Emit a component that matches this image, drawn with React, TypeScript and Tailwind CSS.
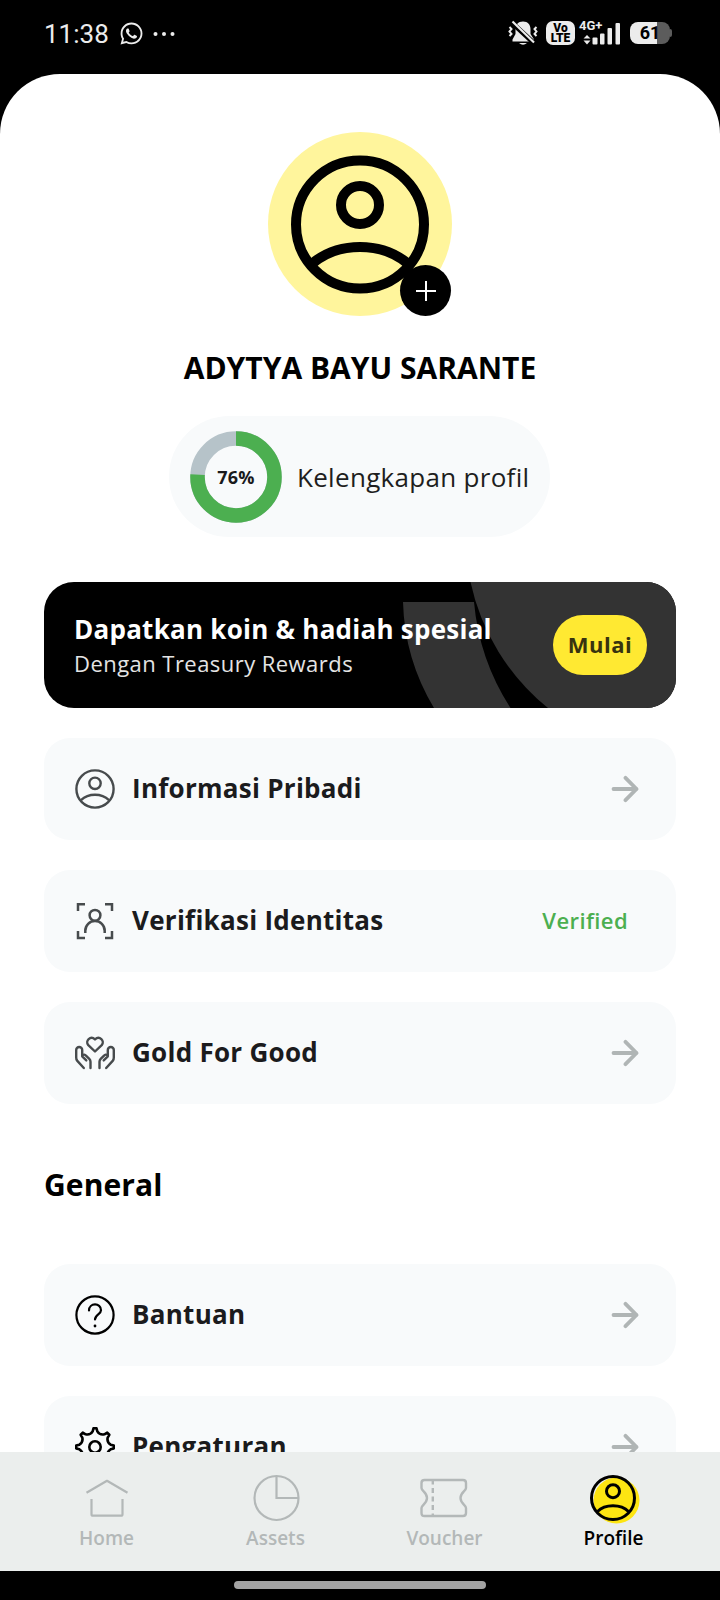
import * as React from "react";
import { FaWhatsapp } from "react-icons/fa";

interface IconProps {
  className?: string;
}

interface MenuRowProps {
  icon: React.ReactNode;
  label: string;
  status?: string;
}

interface NavItemProps {
  icon: React.ReactNode;
  label: string;
  active?: boolean;
}

function PersonIcon({ className }: IconProps) {
  return (
    <svg viewBox="0 0 40 40" fill="none" stroke="currentColor" strokeWidth="2.4" className={className}>
      <circle cx="20" cy="20" r="18.6" />
      <circle cx="20" cy="14.3" r="5.7" />
      <path d="M6 31.2C13.5 24 26.5 24 34 31.2" />
    </svg>
  );
}

function IdentityIcon({ className }: IconProps) {
  return (
    <svg viewBox="0 0 40 40" fill="none" stroke="currentColor" strokeWidth="2.5" className={className}>
      <path d="M10 3.2H3V10M30 3.2h7V10M10 37H3V30M30 37h7V30" />
      <circle cx="20" cy="14.3" r="5.4" />
      <path d="M10.3 32V29.8a9.7 9.7 0 0 1 19.4 0V32" />
    </svg>
  );
}

function CharityIcon({ className }: IconProps) {
  return (
    <svg
      viewBox="0 0 40 40"
      fill="none"
      stroke="currentColor"
      strokeWidth="2.4"
      strokeLinecap="round"
      strokeLinejoin="round"
      className={className}
    >
      <path d="M20 18.5L13.3 12.1C9.8 8 15.5 2 20 6.4C24.5 2 30.2 8 26.7 12.1Z" />
      <path d="M8.8 35L2.1 27.6Q1.2 26.3 1.2 24.5V17a3 3 0 0 1 6 0V23.3L11.3 27.4M7.2 22.7C8.5 21 10 21.6 11.2 22.8L14.3 25.8Q15.5 27 15.5 28.8V35" />
      <path d="M31.2 35L37.9 27.6Q38.8 26.3 38.8 24.5V17a3 3 0 0 0 -6 0V23.3L28.7 27.4M32.8 22.7C31.5 21 30 21.6 28.8 22.8L25.7 25.8Q24.5 27 24.5 28.8V35" />
    </svg>
  );
}

function HelpIcon({ className }: IconProps) {
  return (
    <svg viewBox="0 0 40 40" fill="none" stroke="currentColor" strokeWidth="2.2" strokeLinecap="round" className={className}>
      <circle cx="20" cy="20" r="18.6" />
      <path d="M14 15.5C14 7.5 26 7.5 26 15.2C26 19.3 20 19.5 20 24.5" />
      <circle cx="20" cy="31" r="1.4" fill="currentColor" stroke="none" />
    </svg>
  );
}

// Outline of an eight-toothed cog centred in a 40x40 box
function buildGearPath() {
  const point = (radius: number, degrees: number) => {
    const angle = (degrees * Math.PI) / 180;
    return `${(20 + radius * Math.sin(angle)).toFixed(2)} ${(20 - radius * Math.cos(angle)).toFixed(2)}`;
  };
  let path = `M${point(15.8, -8.5)}`;
  for (let i = 0; i < 8; i++) {
    const a = i * 45;
    path += `L${point(18.8, a - 4.5)}L${point(18.8, a + 4.5)}L${point(15.8, a + 8.5)}`;
    path += `Q${point(12.6, a + 22.5)} ${point(15.8, a + 36.5)}`;
  }
  return path + "Z";
}

const GEAR_PATH = buildGearPath();

function GearIcon({ className }: IconProps) {
  return (
    <svg viewBox="0 0 40 40" fill="none" stroke="currentColor" strokeWidth="2.6" strokeLinejoin="round" className={className}>
      <path d={GEAR_PATH} />
      <circle cx="20" cy="20" r="5.7" />
    </svg>
  );
}

function ArrowIcon() {
  return (
    <svg
      viewBox="0 0 28 28"
      fill="none"
      stroke="currentColor"
      strokeWidth="3.8"
      strokeLinejoin="round"
      strokeLinecap="round"
      className="size-7 text-[#b0b5b5]"
    >
      <path d="M2.5 14H25" />
      <path d="M14.5 2.8L25.5 14L14.5 25.2" />
    </svg>
  );
}

function HomeIcon() {
  return (
    <svg viewBox="0 0 48 48" fill="none" stroke="currentColor" strokeWidth="2.2" strokeLinejoin="round" className="size-12">
      <path d="M3.5 18.8L24 6.8L44.5 18.8" />
      <path d="M8.5 25V40.2Q8.5 41.7 10 41.7H38Q39.5 41.7 39.5 40.2V25" />
    </svg>
  );
}

function AssetsIcon() {
  return (
    <svg viewBox="0 0 48 48" fill="none" stroke="currentColor" strokeWidth="2.2" className="size-12">
      <circle cx="24.5" cy="24" r="22" />
      <path d="M24.5 2V24H46.5" />
    </svg>
  );
}

function VoucherIcon() {
  return (
    <svg viewBox="0 0 48 48" fill="none" stroke="currentColor" strokeWidth="2.4" className="size-12 overflow-visible">
      <path d="M3.5 6H42Q45 6 45 9V14C45 17 39.5 18.5 39.5 24S45 31 45 34V39Q45 42 42 42H3.5Q.5 42 .5 39V34C.5 31 6 29.5 6 24S.5 17 .5 14V9Q.5 6 3.5 6Z" />
      <path d="M11.8 7V41" strokeDasharray="5 3.5" strokeDashoffset="1.5" />
    </svg>
  );
}

function ProfileIcon() {
  return (
    <svg viewBox="0 0 48 48" fill="none" stroke="currentColor" strokeWidth="3" className="size-12 overflow-visible">
      <circle cx="26.5" cy="26.5" r="23" fill="#fde512" stroke="none" />
      <circle cx="23" cy="24" r="21.5" />
      <circle cx="23" cy="17.2" r="6.5" />
      <path d="M7.5 37.5C15 29.7 31 29.7 38.5 37.5" />
    </svg>
  );
}

function StatusBar() {
  return (
    <header className="flex h-[74px] shrink-0 items-start justify-between pl-[44px] pr-[48px] text-[#ececec]">
      <div className="flex h-[67px] items-center">
        <span className="font-['Roboto',sans-serif] text-[26px] leading-[30px]">11:38</span>
        <FaWhatsapp className="ml-[10px] size-[25px]" />
        <svg viewBox="0 0 22 6" fill="currentColor" className="ml-[9px] h-1.5 w-[22px]">
          <circle cx="2.5" cy="3" r="2" />
          <circle cx="11" cy="3" r="2" />
          <circle cx="19.5" cy="3" r="2" />
        </svg>
      </div>
      <div className="flex h-[66px] items-center">
        <svg viewBox="0 0 30 26" fill="currentColor" className="h-[26px] w-[30px]">
          <path d="M15 1.5C20 1.5 22.5 5 22.5 9V14L26 19.5V21.5H4.5V19.5L7.5 14V9C7.5 5 10 1.5 15 1.5Z" />
          <path d="M11 23H19Q15 26.5 11 23Z" />
          <path d="M2 1L27.5 24.5" stroke="#000" strokeWidth="5" />
          <path d="M4.5 1.5L26 22.5" stroke="currentColor" strokeWidth="2.2" />
          <path
            d="M1.5 7L3.5 9L1.5 11.5L3.5 14L1.5 16M28.5 7L26.5 9L28.5 11.5L26.5 14L28.5 16"
            fill="none"
            stroke="currentColor"
            strokeWidth="2"
          />
        </svg>
        <div className="ml-2 flex h-6 w-[29px] flex-col items-center justify-center rounded-[7px] bg-[#ececec] font-['Roboto',sans-serif] text-[12px] font-black leading-[10.5px] text-black">
          <span>Vo</span>
          <span>LTE</span>
        </div>
        <div className="ml-1 flex h-[26px] w-[42px] items-start">
          <div className="flex w-[25px] flex-col items-start">
            <span className="font-['Roboto',sans-serif] text-[13px] font-bold leading-[11px]">4G+</span>
          </div>
          <svg viewBox="0 0 42 26" fill="currentColor" className="-ml-[25px] h-[26px] w-[42px]">
            <path d="M4.5 18.5L8 15L11.5 18.5ZM4.5 20.5L8 24.5L11.5 20.5Z" />
            <rect x="13.5" y="17.5" width="5" height="7" rx="1" />
            <rect x="21" y="13.5" width="4.5" height="11" rx="1" />
            <rect x="28.5" y="8" width="4.5" height="16.5" rx="1" />
            <rect x="36.5" y="3" width="4.5" height="21.5" rx="1" />
          </svg>
        </div>
        <div className="ml-[9px] flex h-[22px] items-center">
          <div className="flex h-[22px] w-[40px] items-center justify-center rounded-[8px] bg-[linear-gradient(to_right,#ececec_27px,#5c5c5c_27px)] font-['Roboto',sans-serif] text-[18px] font-bold leading-[22px] text-black">
            61
          </div>
          <div className="h-2 w-[2px] rounded-r-full bg-[#5c5c5c]" />
        </div>
      </div>
    </header>
  );
}

function Avatar() {
  return (
    <div className="relative mt-[58px] size-[184px] self-center rounded-full bg-[#fff59c]">
      <svg viewBox="0 0 184 184" fill="none" stroke="#000" strokeWidth="10" className="size-full">
        <circle cx="92" cy="92.5" r="64" />
        <circle cx="92" cy="73" r="19" />
        <path d="M43 132.5C70 109 114 109 141 132.5" />
      </svg>
      <div className="absolute bottom-0 right-px flex size-[51px] items-center justify-center rounded-full bg-black">
        <svg viewBox="0 0 20 20" fill="none" stroke="#fff" strokeWidth="2" className="size-5">
          <path d="M10 0V20M0 10H20" />
        </svg>
      </div>
    </div>
  );
}

function ProfileCompletion({ percent }: { percent: number }) {
  return (
    <div className="mt-[28px] ml-[125px] flex h-[121px] w-[381px] items-center rounded-full bg-[#f8fafb] pl-[21px]">
      <div className="flex size-[92px] items-center justify-center">
        <svg viewBox="0 0 92 92" fill="none" strokeWidth="14.5" className="size-[92px] shrink-0">
          <circle cx="46" cy="46" r="38.5" stroke="#b6c3c9" />
          <circle
            cx="46"
            cy="46"
            r="38.5"
            stroke="#4caf50"
            pathLength={100}
            strokeDasharray={`${percent} 100`}
            transform="rotate(-90 46 46)"
          />
        </svg>
        <span className="-ml-[92px] w-[92px] shrink-0 pt-px text-center text-[18px] font-bold leading-6 tracking-[0.3px] text-[#1a1a1c]">
          {percent}%
        </span>
      </div>
      <span className="ml-[15px] whitespace-nowrap text-[26px] leading-9 tracking-[0.3px] text-[#1e1e20]">
        Kelengkapan profil
      </span>
    </div>
  );
}

function RewardsBanner() {
  return (
    <div className="relative mt-[45px] flex h-[126px] items-center justify-between overflow-hidden rounded-[30px] bg-black pl-[30px] pr-[29px]">
      <svg viewBox="0 0 632 126" fill="#333" className="absolute inset-0 size-full">
        <path d="M426.5 0A222 222 0 0 0 504 126H632V0Z" />
        <path d="M359 20H430A234 234 0 0 0 466.5 126H390A217 217 0 0 1 359 20Z" />
      </svg>
      <div className="relative flex flex-col whitespace-nowrap pt-[3px]">
        <span className="text-[26px] font-bold leading-[34px] tracking-[0.25px] text-white">
          Dapatkan koin &amp; hadiah spesial
        </span>
        <span className="text-[22px] leading-[35px] tracking-[0.45px] text-[#e4e4e4]">Dengan Treasury Rewards</span>
      </div>
      <button className="relative flex h-[60px] w-[94px] items-center justify-center rounded-[30px] bg-[#ffe932] pb-px text-[22px] font-bold tracking-[0.5px] text-[#38330f]">
        Mulai
      </button>
    </div>
  );
}

function MenuRow({ icon, label, status }: MenuRowProps) {
  return (
    <div className="flex h-[102px] shrink-0 items-center rounded-[26px] bg-[#f8fafb] pl-[31px] pr-[37px]">
      {icon}
      <span className="ml-[17px] flex-1 whitespace-nowrap pb-[2px] text-[26px] font-bold leading-9 tracking-[0.27px] text-[#1b1b1d]">
        {label}
      </span>
      {status ? (
        <span className="mr-[11px] pb-px text-[22px] font-semibold tracking-[0.4px] text-[#4caf50]">{status}</span>
      ) : (
        <ArrowIcon />
      )}
    </div>
  );
}

function NavItem({ icon, label, active = false }: NavItemProps) {
  return (
    <button className={active ? "flex flex-col items-center text-black" : "flex flex-col items-center text-[#b3b8b8]"}>
      {icon}
      <span className="mt-[2px] text-[19px] font-semibold leading-7">{label}</span>
    </button>
  );
}

export default function App() {
  return (
    <div className="flex h-[1600px] w-[720px] flex-col overflow-hidden bg-black font-['Open_Sans',sans-serif]">
      <StatusBar />

      <main className="flex min-h-0 flex-1 flex-col overflow-hidden rounded-t-[60px] bg-white px-[44px]">
        <Avatar />
        <h1 className="mt-[32px] shrink-0 whitespace-nowrap text-center text-[30px] font-bold leading-10 text-black">
          ADYTYA BAYU SARANTE
        </h1>
        <div className="shrink-0">
          <ProfileCompletion percent={76} />
          <RewardsBanner />
        </div>

        <section className="mt-[30px] flex shrink-0 flex-col gap-[30px]">
          <MenuRow icon={<PersonIcon className="size-10 text-[#474b4d]" />} label="Informasi Pribadi" />
          <MenuRow
            icon={<IdentityIcon className="size-10 text-[#474b4d]" />}
            label="Verifikasi Identitas"
            status="Verified"
          />
          <MenuRow icon={<CharityIcon className="size-10 text-[#474b4d]" />} label="Gold For Good" />
        </section>

        <h2 className="mt-[61px] shrink-0 text-[30px] font-bold leading-10 tracking-[0.1px] text-black">General</h2>

        <section className="mt-[59px] flex shrink-0 flex-col gap-[30px]">
          <MenuRow icon={<HelpIcon className="size-10 text-black" />} label="Bantuan" />
          <MenuRow icon={<GearIcon className="size-10 text-black" />} label="Pengaturan" />
        </section>
      </main>

      {/* Bottom navigation */}
      <nav className="grid h-[119px] shrink-0 grid-cols-4 items-start bg-[#ebeeed] px-[22px] pt-[22px]">
        <NavItem icon={<HomeIcon />} label="Home" />
        <NavItem icon={<AssetsIcon />} label="Assets" />
        <NavItem icon={<VoucherIcon />} label="Voucher" />
        <NavItem icon={<ProfileIcon />} label="Profile" active />
      </nav>

      {/* Gesture handle */}
      <div className="flex h-[29px] shrink-0 items-start justify-center pt-[10px]">
        <div className="h-2 w-[252px] rounded-full bg-[#a3a3a3]" />
      </div>
    </div>
  );
}
